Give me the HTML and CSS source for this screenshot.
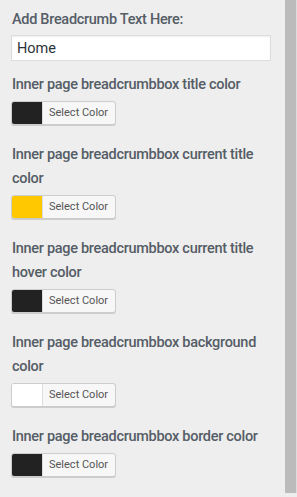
FILE: index.html
```html
<!DOCTYPE html>
<html lang="en">
<head>
    <meta charset="UTF-8">
    <meta name="viewport" content="width=device-width, initial-scale=1.0">
    <title>Breadcrumb Settings</title>
    <link rel="stylesheet" href="styles.css">
</head>
<body>
    <div class="panel">
        <div class="field first">
            <label class="field-label" for="crumb-text">Add Breadcrumb Text Here:</label>
            <input type="text" id="crumb-text" class="text-input" value="Home">
        </div>

        <div class="field">
            <div class="field-label">Inner page breadcrumbbox title color</div>
            <button class="color-button"><span class="swatch dark"></span><span class="button-text">Select Color</span></button>
        </div>

        <div class="field">
            <div class="field-label">Inner page breadcrumbbox current title color</div>
            <button class="color-button"><span class="swatch yellow"></span><span class="button-text">Select Color</span></button>
        </div>

        <div class="field">
            <div class="field-label">Inner page breadcrumbbox current title hover color</div>
            <button class="color-button"><span class="swatch dark"></span><span class="button-text">Select Color</span></button>
        </div>

        <div class="field">
            <div class="field-label">Inner page breadcrumbbox background color</div>
            <button class="color-button"><span class="swatch white"></span><span class="button-text">Select Color</span></button>
        </div>

        <div class="field">
            <div class="field-label">Inner page breadcrumbbox border color</div>
            <button class="color-button"><span class="swatch dark"></span><span class="button-text">Select Color</span></button>
        </div>
    </div>
    <div class="scrollbar"></div>
</body>
</html>
```

FILE: styles.css
```css
body {
    margin: 0;
    font-family: Roboto, "Liberation Sans", sans-serif;
    background-color: #eeeeee;
    color: #555d66;
    display: flex;
    align-items: flex-start;
    min-height: 497px;
}

.panel {
    flex: 1;
    padding: 8px 14px 0 11px;
    box-sizing: border-box;
    width: 285px;
}

.field {
    margin-top: 18px;
}

.field.first {
    margin-top: 0;
    margin-bottom: -6px;
}

.field-label {
    display: block;
    font-size: 14.5px;
    font-weight: 500;
    letter-spacing: -0.3px;
    line-height: 24px;
    padding-left: 1px;
    margin-bottom: 4px;
}

.first .field-label {
    margin-bottom: 3px;
}

.text-input {
    display: block;
    width: 260px;
    height: 26px;
    box-sizing: border-box;
    border: 1px solid #dddddd;
    box-shadow: inset 0 1px 2px rgba(0, 0, 0, 0.07);
    background-color: white;
    font-family: Roboto, "Liberation Sans", sans-serif;
    font-size: 14.5px;
    color: #2c3338;
    padding: 0 5px;
    margin: 0;
    outline: none;
}

.color-button {
    display: flex;
    align-items: stretch;
    height: 24px;
    padding: 0;
    margin: 0;
    border: 1px solid #cccccc;
    border-radius: 3px;
    background-color: #f7f7f7;
    box-shadow: 0 1px 0 #cccccc;
    overflow: hidden;
    cursor: pointer;
    box-sizing: border-box;
}

.swatch {
    width: 30px;
    border-right: 1px solid #dddddd;
}

.dark {
    background-color: #222222;
}

.yellow {
    background-color: #ffc800;
}

.white {
    background-color: #ffffff;
}

.button-text {
    font-family: Roboto, "Liberation Sans", sans-serif;
    font-size: 11px;
    color: #555555;
    line-height: 22px;
    padding: 0 7px 0 6px;
}

.scrollbar {
    width: 11px;
    height: 493px;
    background-color: #bbbbbb;
    border-right: 1px solid #dddddd;
}
```
